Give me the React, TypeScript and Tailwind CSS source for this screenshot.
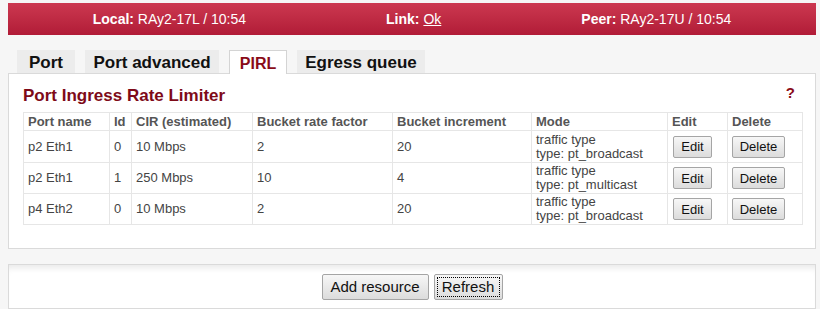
import React from 'react';

type Row = { port: string; id: number; cir: string; rate: number; inc: number; mode: string };

const rows: Row[] = [
  { port: 'p2 Eth1', id: 0, cir: '10 Mbps', rate: 2, inc: 20, mode: 'pt_broadcast' },
  { port: 'p2 Eth1', id: 1, cir: '250 Mbps', rate: 10, inc: 4, mode: 'pt_multicast' },
  { port: 'p4 Eth2', id: 0, cir: '10 Mbps', rate: 2, inc: 20, mode: 'pt_broadcast' },
];

const tabs = [
  { label: 'Port', w: 'w-[58px]' },
  { label: 'Port advanced', w: 'w-[134px]' },
  { label: 'PIRL', w: 'w-[58px]' },
  { label: 'Egress queue', w: 'w-[128px]' },
];

// Small grey system-style button
function Btn({ children, className = '' }: { children: React.ReactNode; className?: string }) {
  return (
    <button
      type="button"
      className={`border border-[#a5a5a5] rounded-[2px] bg-gradient-to-b from-[#f7f7f7] to-[#dcdcdc] text-[#111] leading-none ${className}`}
    >
      {children}
    </button>
  );
}

export default function App() {
  return (
    <div className="min-h-screen bg-[#f6f6f6] pl-2 pr-1 pt-[3px] font-['Liberation_Sans',Arial,sans-serif]">
      {/* Status header */}
      <div className="h-[32px] bg-gradient-to-b from-[#cc3850] to-[#b11b37] flex items-center justify-center gap-[140px] text-white text-[14px]">
        <span>
          <b>Local:</b> RAy2-17L / 10:54
        </span>
        <span>
          <b>Link:</b> <span className="underline">Ok</span>
        </span>
        <span>
          <b>Peer:</b> RAy2-17U / 10:54
        </span>
      </div>

      {/* Tabs */}
      <div className="mt-[15px] flex items-end gap-[10px] pl-[9px] h-[23px] relative z-10">
        {tabs.map((t) =>
          t.label === 'PIRL' ? (
            <div
              key={t.label}
              className={`${t.w} h-[24px] -mb-px pt-[3px] flex items-center justify-center bg-white border border-b-0 border-[#d4d4d4] text-[16px] font-bold text-[#8a0b18] whitespace-nowrap`}
            >
              {t.label}
            </div>
          ) : (
            <div
              key={t.label}
              className={`${t.w} h-[23px] pt-[3px] flex items-center justify-center bg-[#ececec] text-[17px] font-bold text-[#111] whitespace-nowrap`}
            >
              {t.label}
            </div>
          )
        )}
      </div>

      {/* PIRL panel */}
      <div className="bg-white border border-[#dadada] px-[14px] pt-[12px] pb-[23px]">
        <div className="flex items-center justify-between h-[20px] mb-[6px]">
          <h2 className="text-[17px] font-bold text-[#7e0a18]">Port Ingress Rate Limiter</h2>
          <span className="text-[15px] font-bold text-[#8a0b18] mr-[6px] -mt-[6px]">?</span>
        </div>
        <table className="w-[779px] table-fixed border-collapse text-[13px] text-[#444]">
          <colgroup>
            <col className="w-[86px]" />
            <col className="w-[22px]" />
            <col className="w-[121px]" />
            <col className="w-[140px]" />
            <col className="w-[139px]" />
            <col className="w-[136px]" />
            <col className="w-[60px]" />
            <col className="w-[75px]" />
          </colgroup>
          <thead>
            <tr className="h-[18px] text-left font-bold text-[#555]">
              {['Port name', 'Id', 'CIR (estimated)', 'Bucket rate factor', 'Bucket increment', 'Mode', 'Edit', 'Delete'].map(
                (h) => (
                  <th key={h} className="border border-[#e6e6e6] px-[4px] py-0 leading-[16px] font-bold whitespace-nowrap">
                    {h}
                  </th>
                )
              )}
            </tr>
          </thead>
          <tbody>
            {rows.map((r, i) => (
              <tr key={i} className={i === 0 ? 'h-[32px]' : 'h-[31px]'}>
                <td className="border border-[#e6e6e6] px-[4px]">{r.port}</td>
                <td className="border border-[#e6e6e6] px-[4px]">{r.id}</td>
                <td className="border border-[#e6e6e6] px-[4px]">{r.cir}</td>
                <td className="border border-[#e6e6e6] px-[4px]">{r.rate}</td>
                <td className="border border-[#e6e6e6] px-[4px]">{r.inc}</td>
                <td className="border border-[#e6e6e6] px-[4px] py-0 text-[13px] leading-[14px] whitespace-nowrap">
                  traffic type
                  <br />
                  type: {r.mode}
                </td>
                <td className="border border-[#e6e6e6] px-[5px]">
                  <Btn className="w-[39px] h-[22px] text-[13px]">Edit</Btn>
                </td>
                <td className="border border-[#e6e6e6] px-[4px]">
                  <Btn className="w-[53px] h-[22px] text-[13px]">Delete</Btn>
                </td>
              </tr>
            ))}
          </tbody>
        </table>
      </div>

      {/* Action bar */}
      <div className="mt-[15px] h-[45px] bg-white border border-[#dadada] shadow-[inset_0_7px_6px_-4px_rgba(0,0,0,0.09)] flex items-center justify-center gap-[5px]">
        <Btn className="w-[107px] h-[26px] text-[15px]">Add resource</Btn>
        <Btn className="w-[69px] h-[26px] text-[15px] outline-1 outline-dotted outline-black -outline-offset-4">Refresh</Btn>
      </div>
    </div>
  );
}
